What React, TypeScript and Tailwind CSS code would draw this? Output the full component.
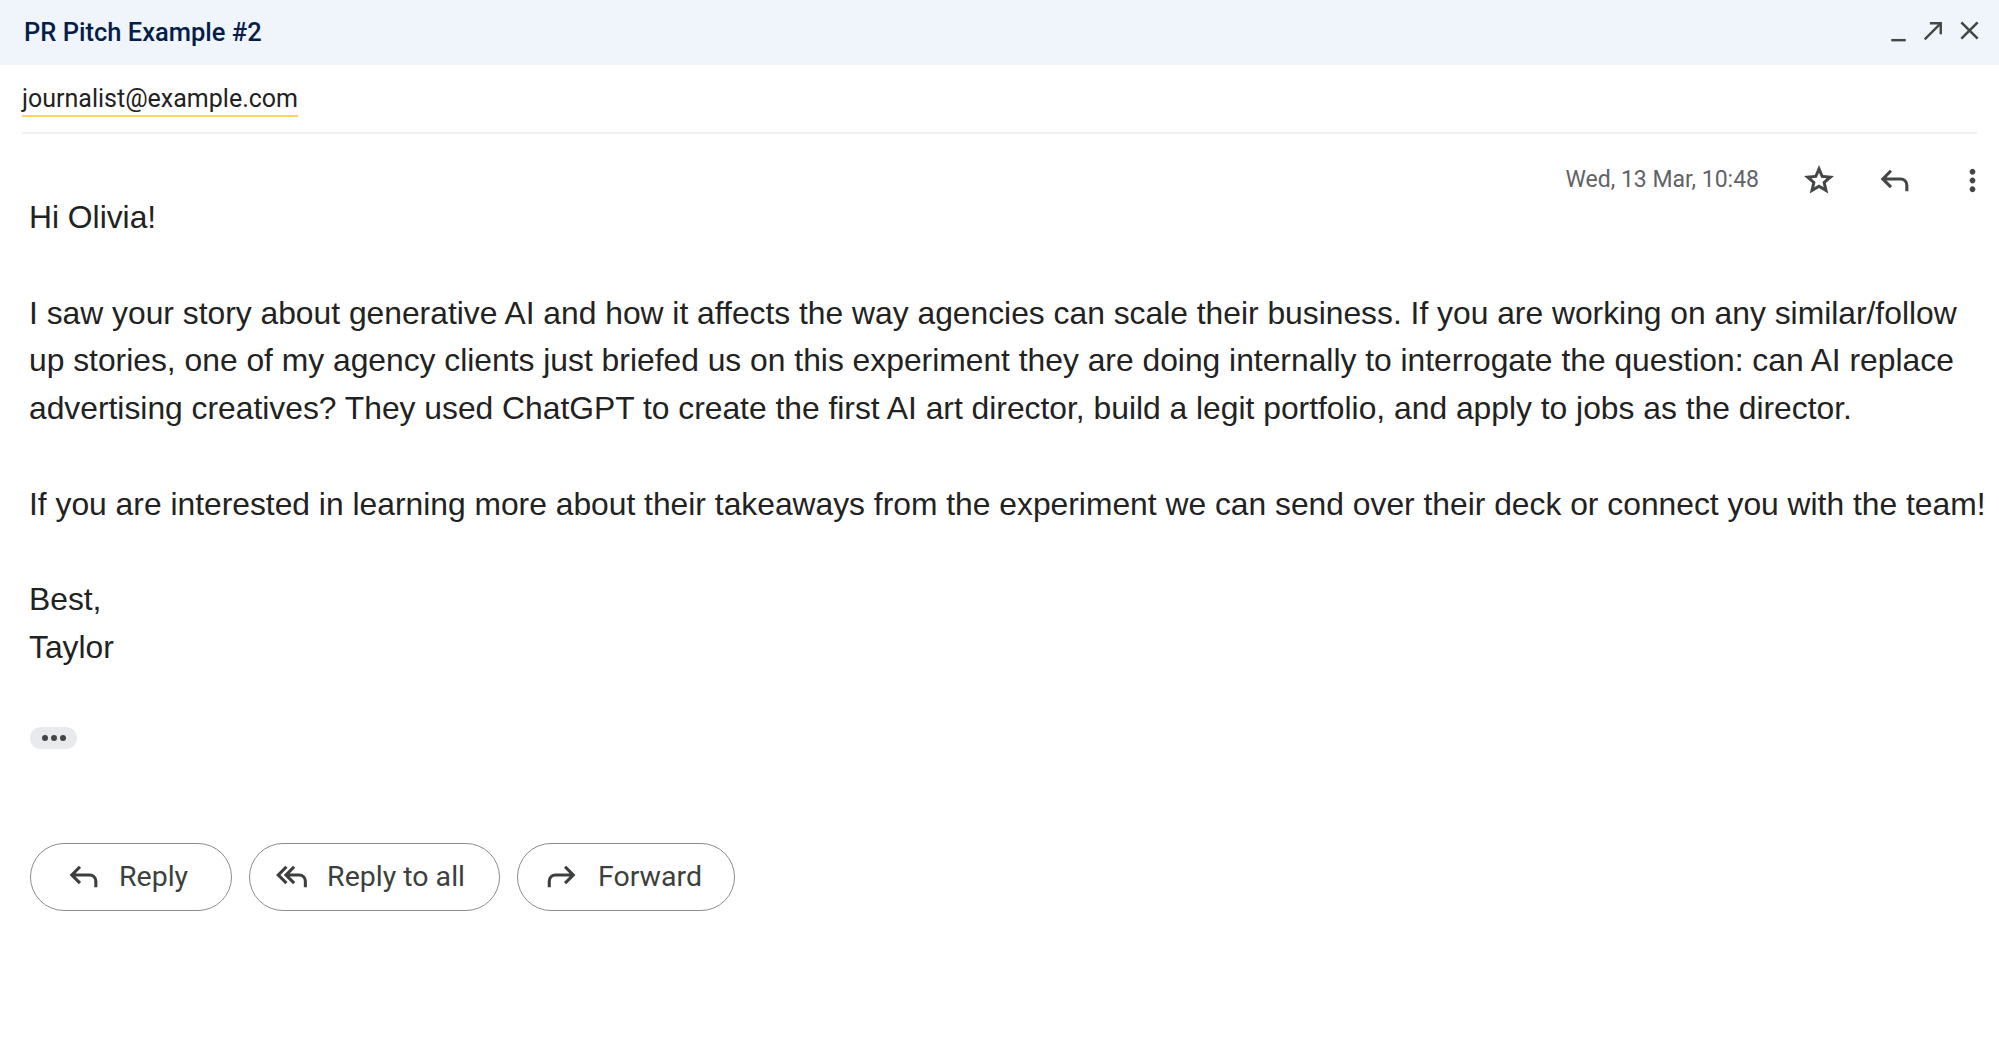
import type { ReactNode } from 'react';

const Icon = ({ d, className }: { d: string; className?: string }) => (
    <svg viewBox="0 -960 960 960" fill="currentColor" className={className}>
        <path d={d} />
    </svg>
);

const ICONS = {
    minimize: 'M240-120v-80h480v80H240Z',
    northEast: 'M216-160l-56-56 464-464H360v-80h400v400h-80v-264L216-160Z',
    close: 'm256-200-56-56 224-224-224-224 56-56 224 224 224-224 56 56-224 224 224 224-56 56-224-224-224 224Z',
    star: 'm354-287 126-76 126 77-33-144 111-96-146-13-58-136-58 135-146 13 111 97-33 143ZM233-120l65-281L80-590l288-25 112-265 112 265 288 25-218 189 65 281-247-149-247 149Z',
    reply: 'M760-200v-160q0-50-35-85t-85-35H273l144 144-57 56-240-240 240-240 57 56-144 144h367q83 0 141.5 58.5T840-360v160h-80Z',
    replyAll: 'M320-280 80-520l240-240 57 56-184 184 184 184-57 56Zm480 80v-160q0-50-35-85t-85-35H433l144 144-57 56-240-240 240-240 57 56-144 144h247q83 0 141.5 58.5T880-360v160h-80Z',
    forward: 'M200-200v-160q0-83 58.5-141.5T400-560h367L623-704l57-56 240 240-240 240-57-56 144-144H400q-50 0-85 35t-35 85v160h-80Z',
    more: 'M480-160q-33 0-56.5-23.5T400-240q0-33 23.5-56.5T480-320q33 0 56.5 23.5T560-240q0 33-23.5 56.5T480-160Zm0-240q-33 0-56.5-23.5T400-480q0-33 23.5-56.5T480-560q33 0 56.5 23.5T560-480q0 33-23.5 56.5T480-400Zm0-240q-33 0-56.5-23.5T400-720q0-33 23.5-56.5T480-800q33 0 56.5 23.5T560-720q0 33-23.5 56.5T480-640Z',
};

const ActionButton = ({ icon, label, className }: { icon: ReactNode; label: string; className: string }) => (
    <button className={`h-[68px] flex items-center rounded-full border-[1.5px] border-[#8a8d8c] text-[#3c3f3e] [font-family:Roboto,sans-serif] text-[28.5px] ${className}`}>
        {icon}
        <span>{label}</span>
    </button>
);

const bodyLines: (string | null)[] = [
    'Hi Olivia!',
    null,
    'I saw your story about generative AI and how it affects the way agencies can scale their business. If you are working on any similar/follow',
    'up stories, one of my agency clients just briefed us on this experiment they are doing internally to interrogate the question: can AI replace',
    'advertising creatives? They used ChatGPT to create the first AI art director, build a legit portfolio, and apply to jobs as the director.',
    null,
    'If you are interested in learning more about their takeaways from the experiment we can send over their deck or connect you with the team!',
    null,
    'Best,',
    'Taylor',
];

export default function App() {
    return (
        <div className="w-[1999px] h-[1045px] bg-white overflow-hidden">
            {/* Title bar */}
            <div className="h-[65px] bg-[#f0f4fb] flex items-center justify-between pl-[24px] pr-[14px]">
                <h1 className="text-[25.5px] font-medium text-[#041e49] [font-family:Roboto,sans-serif]">PR Pitch Example #2</h1>
                <div className="flex items-center gap-[6px] text-[#444746] -mt-[4px]">
                    <Icon d={ICONS.minimize} className="w-[29px] h-[29px]" />
                    <Icon d={ICONS.northEast} className="w-[29px] h-[29px]" />
                    <Icon d={ICONS.close} className="w-[31px] h-[31px]" />
                </div>
            </div>

            {/* Recipient */}
            <div className="mx-[22px] pt-[18px] pb-[15px] border-b-[2px] border-[#f0f0f0]">
                <span className="inline-block leading-[32px] text-[25px] text-[#222] [font-family:Roboto,sans-serif] border-b-[2px] border-[#fcd462]">
                    journalist@example.com
                </span>
            </div>

            {/* Meta row */}
            <div className="mt-[28px] h-[36px] flex items-center justify-end pr-[9px] text-[#444746]">
                <span className="text-[23px] text-[#5f6368] [font-family:Roboto,sans-serif] mr-[42px]">Wed, 13 Mar, 10:48</span>
                <Icon d={ICONS.star} className="w-[36px] h-[36px] mr-[39px]" />
                <Icon d={ICONS.reply} className="w-[37px] h-[37px] mr-[42px]" />
                <Icon d={ICONS.more} className="w-[35px] h-[35px]" />
            </div>

            {/* Body */}
            <div className="-mt-[4px] pl-[29px] [font-family:'Liberation_Sans',Arial,sans-serif] text-[31.8px] leading-[47.8px] text-[#222]">
                {bodyLines.map((line, i) => (
                    <div key={i} className="whitespace-nowrap h-[47.8px]">{line}</div>
                ))}
            </div>

            <div className="pl-[30px] mt-[55px]">
                <div className="w-[47px] h-[22px] rounded-full bg-[#e8eaed] flex items-center justify-center gap-[3px]">
                    <span className="w-[6px] h-[6px] rounded-full bg-[#444]" />
                    <span className="w-[6px] h-[6px] rounded-full bg-[#444]" />
                    <span className="w-[6px] h-[6px] rounded-full bg-[#444]" />
                </div>
            </div>

            {/* Actions */}
            <div className="pl-[30px] mt-[94px] flex gap-[17px]">
                <ActionButton
                    className="pl-[34px] pr-[43px] gap-[17px]"
                    icon={<Icon d={ICONS.reply} className="w-[37px] h-[37px]" />}
                    label="Reply"
                />
                <ActionButton
                    className="pl-[23px] pr-[34px] gap-[17px]"
                    icon={<Icon d={ICONS.replyAll} className="w-[37px] h-[37px]" />}
                    label="Reply to all"
                />
                <ActionButton
                    className="pl-[22px] pr-[32px] gap-[21px]"
                    icon={<Icon d={ICONS.forward} className="w-[37px] h-[37px]" />}
                    label="Forward"
                />
            </div>
        </div>
    );
}
